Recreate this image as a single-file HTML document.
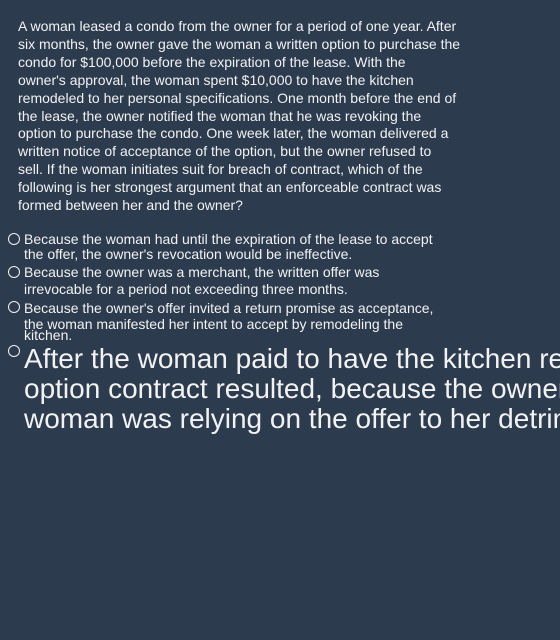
<!DOCTYPE html>
<html><head><style>
body{margin:0;width:560px;height:640px;background:#2c3b4e;overflow:hidden;position:relative;font-family:"Liberation Sans",sans-serif;color:#f2f2f2}
.p{position:absolute;left:18px;top:18px;font-size:14px;line-height:17.9px;white-space:nowrap}
.l{position:absolute;white-space:nowrap;font-size:14px;left:24px}
.c{position:absolute;left:8px;width:10px;height:10px;border:1px solid #f2f2f2;border-radius:50%}
.b{position:absolute;left:24px;font-size:28px;line-height:30px;white-space:nowrap}
</style></head><body>
<div class="p">A woman leased a condo from the owner for a period of one year. After<br>six months, the owner gave the woman a written option to purchase the<br>condo for $100,000 before the expiration of the lease. With the<br>owner's approval, the woman spent $10,000 to have the kitchen<br>remodeled to her personal specifications. One month before the end of<br>the lease, the owner notified the woman that he was revoking the<br>option to purchase the condo. One week later, the woman delivered a<br>written notice of acceptance of the option, but the owner refused to<br>sell. If the woman initiates suit for breach of contract, which of the<br>following is her strongest argument that an enforceable contract was<br>formed between her and the owner?</div>
<div class="c" style="top:233px"></div>
<div class="l" style="top:231px">Because the woman had until the expiration of the lease to accept</div>
<div class="l" style="top:246px">the offer, the owner's revocation would be ineffective.</div>
<div class="c" style="top:266px"></div>
<div class="l" style="top:264px">Because the owner was a merchant, the written offer was</div>
<div class="l" style="top:281px">irrevocable for a period not exceeding three months.</div>
<div class="c" style="top:301px"></div>
<div class="l" style="top:300px">Because the owner's offer invited a return promise as acceptance,</div>
<div class="l" style="top:316px">the woman manifested her intent to accept by remodeling the</div>
<div class="l" style="top:327px">kitchen.</div>
<div class="c" style="top:345px"></div>
<div class="b" style="top:344px">After the woman paid to have the kitchen remodeled, an<br>option contract resulted, because the owner knew the<br>woman was relying on the offer to her detriment.</div>
</body></html>
